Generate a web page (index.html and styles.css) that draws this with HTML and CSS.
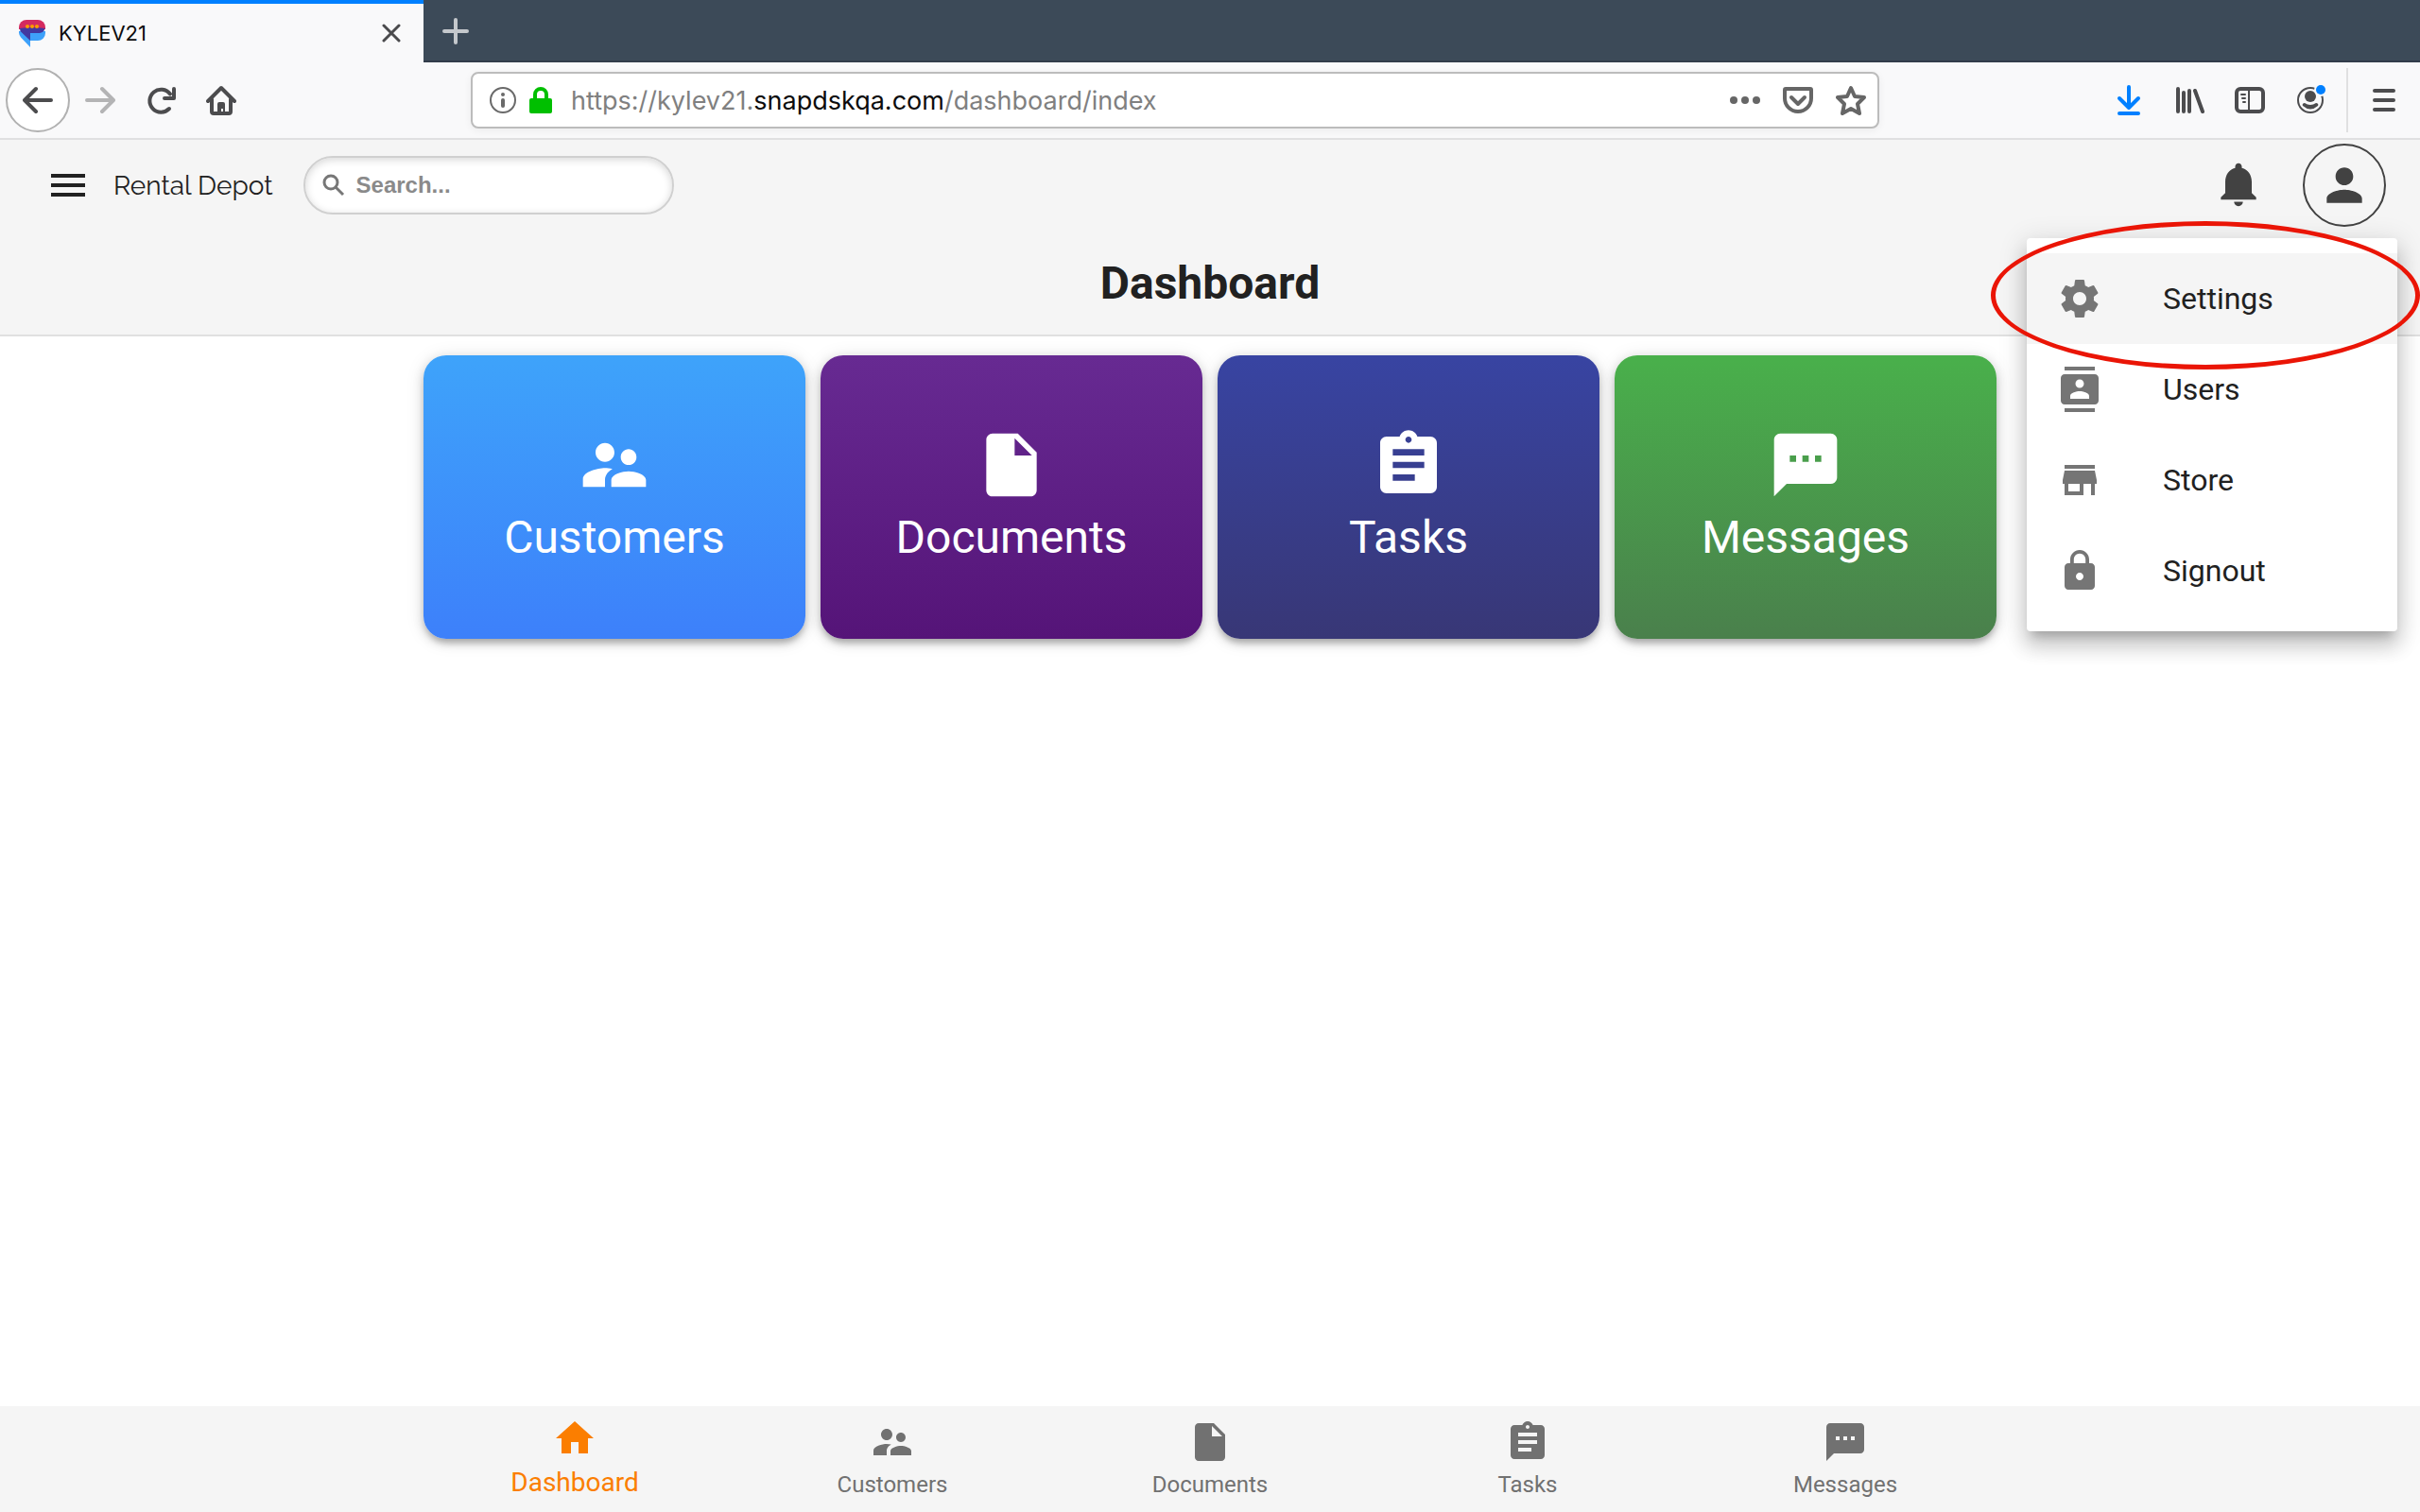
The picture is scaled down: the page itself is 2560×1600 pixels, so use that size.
FILE: index.html
```html
<!DOCTYPE html>
<html lang="en">
<head>
	<meta charset="UTF-8">
	<title>KYLEV21</title>
	<link rel="stylesheet" href="styles.css">
</head>
<body>

	<!-- shared icons -->
	<svg class="sprite" width="0" height="0" aria-hidden="true">
		<symbol id="i-people" viewBox="0 0 24 24"><path d="M16.5 12c1.38 0 2.49-1.12 2.49-2.5S17.88 7 16.5 7C15.12 7 14 8.12 14 9.500s1.12 2.500 2.500 2.500zM9 11c1.660 0 2.990-1.340 2.990-3S10.660 5 9 5C7.340 5 6 6.340 6 8s1.340 3 3 3zm7.500 3c-1.830 0-5.500.92-5.500 2.750V19h11v-2.250c0-1.830-3.670-2.750-5.500-2.750zM9 13c-2.330 0-7 1.170-7 3.500V19h7v-2.250c0-.85.33-2.340 2.370-3.470C10.500 13.100 9.660 13 9 13z"/></symbol>
		<symbol id="i-doc" viewBox="0 0 24 24"><path d="M6 2c-1.100 0-1.990.9-1.990 2L4 20c0 1.100.89 2 1.990 2H18c1.100 0 2-.9 2-2V8l-6-6H6zm7 7V3.500L18.500 9H13z"/></symbol>
		<symbol id="i-tasks" viewBox="0 0 24 24"><path d="M19 3h-4.180C14.400 1.840 13.300 1 12 1c-1.300 0-2.400.84-2.820 2H5c-1.100 0-2 .9-2 2v14c0 1.100.9 2 2 2h14c1.100 0 2-.9 2-2V5c0-1.100-.9-2-2-2zm-7 0c.55 0 1 .45 1 1s-.45 1-1 1-1-.45-1-1 .45-1 1-1zm2 14H7v-2h7v2zm3-4H7v-2h10v2zm0-4H7V7h10v2z"/></symbol>
		<symbol id="i-chat" viewBox="0 0 24 24"><path d="M20 2H4c-1.100 0-1.990.9-1.990 2L2 22l4-4h14c1.100 0 2-.9 2-2V4c0-1.100-.9-2-2-2zM9 11H7V9h2v2zm4 0h-2V9h2v2zm4 0h-2V9h2v2z"/></symbol>
	</svg>

	<div class="tabs">
		<div class="tab">
			<svg class="favicon" viewBox="0 0 28 29">
				<path fill="#3ea1fa" d="M0 12h28v2a8 8 0 0 1-8 8h-8v7L2 18.500A9 9 0 0 1 0 12z"/>
				<path fill="#d42a5f" d="M8 0h12a8 8 0 0 1 8 8v2H0V8a8 8 0 0 1 8-8z"/>
				<path fill="#4338a0" d="M1 9q13-2 26.500 0c-.5 3-3 5-7.500 5h-8v8L1.500 12z"/>
				<g fill="#fb9c00"><circle cx="9" cy="7" r="2"/><circle cx="14" cy="7" r="2"/><circle cx="19" cy="7" r="2"/></g>
			</svg>
			<span class="tabTitle">KYLEV21</span>
			<button class="tabClose" aria-label="Close tab">
				<svg viewBox="0 0 20 20"><path d="M2 2l16 16M18 2L2 18" fill="none" stroke="#4a4a4c" stroke-width="3" stroke-linecap="round"/></svg>
			</button>
		</div>
		<button class="newTab" aria-label="New tab">
			<svg viewBox="0 0 28 28"><path d="M14 2v24M2 14h24" fill="none" stroke="#c4c8cc" stroke-width="4" stroke-linecap="round"/></svg>
		</button>
	</div>

	<div class="toolbar">
		<button class="back" aria-label="Back">
			<svg class="line" viewBox="0 0 32 32"><path d="M30 16H3M14 4L2 16l12 12"/></svg>
		</button>
		<button class="tool forward" aria-label="Forward">
			<svg class="line" viewBox="0 0 32 32"><path d="M2 16h27M18 4l12 12-12 12"/></svg>
		</button>
		<button class="tool" aria-label="Reload">
			<svg class="line" viewBox="0 0 32 32"><path d="M25 25A12 12 0 1 1 26 9.500"/><path d="M30 4v10H20"/></svg>
		</button>
		<button class="tool" aria-label="Home">
			<svg class="line" viewBox="0 0 32 32"><path d="M2 17L16 3l14 14M6 15v13q0 2 2 2h16q2 0 2-2V15"/><path d="M12 30V20q0-2 2-2h4q2 0 2 2v10h-2v-5h-2v5z" fill="#4c4c4e" stroke="none"/></svg>
		</button>

		<div class="urlbar">
			<svg class="info" viewBox="0 0 32 32"><circle cx="16" cy="16" r="13" fill="none" stroke="#6a6a6a" stroke-width="2"/><circle cx="16" cy="10" r="2" fill="#6a6a6a"/><rect x="14" y="14" width="4" height="10" rx="2" fill="#6a6a6a"/></svg>
			<svg class="secure" viewBox="0 0 24 28"><path d="M6 14V8a6 6 0 0 1 12 0v6" fill="none" stroke="#00bf00" stroke-width="4"/><rect y="12" width="24" height="16" rx="2" fill="#00bf00"/></svg>
			<div class="url" role="textbox" aria-label="Address">https://kylev21.<b>snapdskqa.com</b>/dashboard/index</div>
			<button class="urlTool" aria-label="Page actions">
				<svg viewBox="0 0 32 32"><g fill="#666"><circle cx="4" cy="16" r="4"/><circle cx="16" cy="16" r="4"/><circle cx="28" cy="16" r="4"/></g></svg>
			</button>
			<button class="urlTool" aria-label="Save to Pocket">
				<svg class="line" viewBox="0 0 32 32"><path d="M3 4h26q1 0 1 1v9a14 14 0 0 1-28 0V5q0-1 1-1z"/><path d="M9 13l7 7 7-7"/></svg>
			</button>
			<button class="urlTool" aria-label="Bookmark this page">
				<svg class="line" viewBox="0 0 32 32"><path d="M16 3l4 9 10 1-7 7 2 10-9-5-9 5 2-10-7-7 10-1z"/></svg>
			</button>
		</div>

		<button class="tool downloads" aria-label="Downloads">
			<svg class="line" viewBox="0 0 32 32"><path d="M16 2v21M6 14l10 10 10-10M6 30h20"/></svg>
		</button>
		<button class="tool" aria-label="Library">
			<svg class="line" viewBox="0 0 32 32"><path d="M4 4v24M10 8v20M16 6v22M22 6l8 22"/></svg>
		</button>
		<button class="tool" aria-label="Sidebars">
			<svg class="line" viewBox="0 0 32 32"><rect x="2" y="4" width="28" height="24" rx="4"/><path d="M15 4v24M7 10h4M8 14h3M9 18h2" stroke-width="2"/></svg>
		</button>
		<button class="tool" aria-label="Account">
			<svg viewBox="0 0 32 32"><circle cx="16" cy="16" r="13" fill="none" stroke="#4c4c4e" stroke-width="2"/><circle cx="16" cy="12" r="6" fill="#4c4c4e"/><path d="M10 19q6 4 12 0c2 0 3 2 2 3q-8 7-16 0c-1-1 0-3 2-3z" fill="#4c4c4e"/><circle cx="27" cy="5" r="7" fill="#f9f9fa"/><circle cx="27" cy="5" r="5" fill="#0080ff"/></svg>
		</button>
		<span class="divider"></span>
		<button class="appMenu" aria-label="Open menu">
			<svg class="line" viewBox="0 0 32 32"><path d="M6 6h20M6 16h20M6 26h20"/></svg>
		</button>
	</div>

	<header class="header">
		<div class="bar">
			<button class="iconBtn" aria-label="Menu">
				<svg class="menuIcon" viewBox="0 0 24 24"><path d="M3 18h18v-2H3v2zm0-5h18v-2H3v2zm0-7v2h18V6H3z"/></svg>
			</button>
			<span class="company">Rental Depot</span>
			<label class="search">
				<svg viewBox="0 0 24 24"><circle cx="9" cy="9" r="7" fill="none" stroke="#777" stroke-width="3"/><path d="M14 14l8 8" stroke="#777" stroke-width="3"/></svg>
				<input type="text" placeholder="Search..." aria-label="Search">
			</label>
			<button class="iconBtn bell" aria-label="Notifications">
				<svg viewBox="0 0 24 24"><path d="M12 21.500c1.100 0 2-.9 2-2h-4c0 1.100.89 2 2 2zm6-6v-5c0-3.070-1.640-5.640-4.500-6.320V3.500c0-.83-.67-1.500-1.500-1.500s-1.500.67-1.500 1.500v.68C7.630 4.860 6 7.420 6 10.500v5l-2 2v1h16v-1l-2-2z"/></svg>
			</button>
			<button class="iconBtn avatar" aria-label="Account menu">
				<svg viewBox="0 0 24 24"><path d="M12 12c2.210 0 4-1.790 4-4s-1.790-4-4-4-4 1.790-4 4 1.790 4 4 4zm0 2c-2.670 0-8 1.340-8 4v2h16v-2c0-2.660-5.330-4-8-4z"/></svg>
			</button>
		</div>
		<h1 class="title">Dashboard</h1>

		<nav class="menu">
			<a class="active" href="#settings">
				<svg viewBox="0 0 24 24"><path d="M19.430 12.980c.04-.32.07-.64.07-.98s-.03-.66-.07-.98l2.110-1.650c.19-.15.24-.42.12-.64l-2-3.460c-.12-.22-.39-.3-.61-.22l-2.490 1c-.52-.4-1.080-.73-1.690-.98l-.38-2.650C14.460 2.180 14.250 2 14 2h-4c-.25 0-.46.18-.49.42l-.38 2.650c-.61.25-1.170.59-1.690.98l-2.490-1c-.23-.09-.49 0-.61.22l-2 3.460c-.13.22-.07.49.12.64l2.110 1.650c-.04.32-.07.65-.07.98s.03.66.07.98l-2.110 1.650c-.19.15-.24.42-.12.64l2 3.460c.12.22.39.3.61.22l2.490-1c.52.4 1.080.73 1.690.98l.38 2.650c.03.24.24.42.49.42h4c.25 0 .46-.18.49-.42l.38-2.650c.61-.25 1.170-.59 1.690-.98l2.490 1c.23.09.49 0 .61-.22l2-3.460c.12-.22.07-.49-.12-.64l-2.110-1.650zM12 15.500c-1.930 0-3.500-1.570-3.500-3.500s1.570-3.500 3.500-3.500 3.500 1.570 3.500 3.500-1.570 3.500-3.500 3.500z"/></svg>
				Settings
			</a>
			<a href="#users">
				<svg viewBox="0 0 24 24"><path d="M20 0H4v2h16V0zM4 24h16v-2H4v2zM20 4H4c-1.100 0-2 .9-2 2v12c0 1.100.9 2 2 2h16c1.100 0 2-.9 2-2V6c0-1.100-.9-2-2-2zm-8 2.750c1.240 0 2.250 1.010 2.250 2.250s-1.010 2.250-2.250 2.250S9.750 10.240 9.750 9 10.760 6.750 12 6.750zM17 17H7v-1.500c0-1.670 3.330-2.500 5-2.500s5 .83 5 2.500V17z"/></svg>
				Users
			</a>
			<a href="#store">
				<svg viewBox="0 0 24 24"><path d="M20 4H4v2h16V4zm1 10v-2l-1-5H4l-1 5v2h1v6h10v-6h4v6h2v-6h1zm-9 4H6v-4h6v4z"/></svg>
				Store
			</a>
			<a href="#signout">
				<svg viewBox="0 0 24 24"><path d="M18 8h-1V6c0-2.760-2.240-5-5-5S7 3.240 7 6v2H6c-1.100 0-2 .9-2 2v10c0 1.100.9 2 2 2h12c1.100 0 2-.9 2-2V10c0-1.100-.9-2-2-2zm-6 9c-1.100 0-2-.9-2-2s.9-2 2-2 2 .9 2 2-.9 2-2 2zm3.100-9H8.900V6c0-1.710 1.390-3.100 3.100-3.100 1.710 0 3.100 1.390 3.100 3.100v2z"/></svg>
				Signout
			</a>
		</nav>
		<span class="marker"></span>
	</header>

	<main class="cards">
		<a class="card customers" href="#customers"><svg><use href="#i-people"/></svg>Customers</a>
		<a class="card documents" href="#documents"><svg><use href="#i-doc"/></svg>Documents</a>
		<a class="card tasks" href="#tasks"><svg><use href="#i-tasks"/></svg>Tasks</a>
		<a class="card messages" href="#messages"><svg><use href="#i-chat"/></svg>Messages</a>
	</main>

	<nav class="bottom">
		<a class="active" href="#dashboard"><svg viewBox="0 0 24 24"><path d="M10 20v-6h4v6h5v-8h3L12 3 2 12h3v8z"/></svg>Dashboard</a>
		<a href="#customers"><svg><use href="#i-people"/></svg>Customers</a>
		<a href="#documents"><svg><use href="#i-doc"/></svg>Documents</a>
		<a href="#tasks"><svg><use href="#i-tasks"/></svg>Tasks</a>
		<a href="#messages"><svg><use href="#i-chat"/></svg>Messages</a>
	</nav>

</body>
</html>
```
FILE: styles.css
```css
*{
	margin: 0;
	padding: 0;
	box-sizing: border-box;
}
body{
	display: flex;
	flex-direction: column;
	min-height: 100vh;
	background: #fff;
	color: #212121;
	font-family: Roboto, sans-serif;
}
a{
	color: inherit;
	text-decoration: none;
}
button{
	display: flex;
	align-items: center;
	justify-content: center;
	border: none;
	background: none;
}
svg{
	display: block;
	flex: none;
	fill: currentColor;
}
.sprite{
	position: absolute;
}

/* browser tabs */
.tabs{
	display: flex;
	height: 66px;
	background: #3c4a58;
	border-bottom: 2px solid #323c4a;
}
.tab{
	display: flex;
	align-items: center;
	width: 448px;
	height: 66px;
	padding: 0 24px 0 20px;
	border-top: 4px solid #0080ff;
	background: #f9f9fa;
}
.favicon{
	width: 28px;
	height: 29px;
}
.tabTitle{
	flex: 1;
	margin-left: 14px;
	color: #0c0c0d;
	font: 22px Inter, sans-serif;
}
.tabClose svg{
	width: 20px;
	height: 20px;
}
.newTab{
	width: 68px;
	height: 66px;
}
.newTab svg{
	width: 28px;
	height: 28px;
}

/* browser toolbar */
.toolbar{
	display: flex;
	align-items: center;
	height: 82px;
	padding-left: 6px;
	background: #f9f9fa;
	border-bottom: 2px solid #e0e0e1;
	color: #4c4c4e;
}
.toolbar button svg{
	width: 32px;
	height: 32px;
}
.toolbar .line{
	fill: none;
	stroke: currentColor;
	stroke-width: 4;
	stroke-linecap: round;
	stroke-linejoin: round;
}
.back{
	width: 68px;
	height: 68px;
	border: 2px solid #b1b1b1;
	border-radius: 50%;
	background: #fff;
}
.tool{
	width: 64px;
	height: 64px;
	color: inherit;
}
.back,.appMenu{
	color: inherit;
}
.forward{
	color: #b4b4b5;
}
.downloads{
	color: #0080ff;
}
.urlbar{
	display: flex;
	flex: 1;
	align-items: center;
	height: 60px;
	margin: 0 232px;
	padding-left: 16px;
	border: 2px solid #bcbcbc;
	border-radius: 8px;
	background: #fff;
	box-shadow: 0 2px 8px rgba(0,0,0,.06);
}
.info{
	width: 32px;
	height: 32px;
}
.secure{
	width: 24px;
	height: 28px;
	margin-left: 12px;
}
.url{
	flex: 1;
	margin-left: 20px;
	color: #808080;
	font: 27px Inter, sans-serif;
}
.url b{
	color: #0c0c0d;
	font-weight: normal;
}
.urlTool{
	width: 56px;
	height: 56px;
	color: #666;
}
.divider{
	width: 2px;
	height: 68px;
	margin-left: 6px;
	background: #e0e0e1;
}
.appMenu{
	width: 76px;
	height: 64px;
}

/* page header */
.header{
	position: relative;
	background: #f5f5f5;
	border-bottom: 2px solid #e0e0e0;
}
.bar{
	display: flex;
	align-items: center;
	height: 96px;
	padding: 0 36px 0 48px;
}
.iconBtn{
	color: #424242;
}
.iconBtn svg{
	width: 56px;
	height: 56px;
}
.iconBtn .menuIcon{
	width: 48px;
	height: 48px;
	color: #212121;
}
.company{
	margin: 0 32px 0 24px;
	font: 28px Raleway, Lato, sans-serif;
}
.search{
	display: flex;
	align-items: center;
	width: 392px;
	height: 62px;
	padding: 0 18px;
	border: 2px solid #d0d0d0;
	border-radius: 31px;
	background: #fff;
	box-shadow: inset 0 2px 8px rgba(0,0,0,.16);
}
.search svg{
	width: 24px;
	height: 24px;
}
.search input{
	flex: 1;
	min-width: 0;
	margin-left: 12px;
	border: none;
	outline: none;
	background: none;
	font: bold 24px "Liberation Sans", sans-serif;
}
.search input::placeholder{
	color: #8a8a8a;
}
.bell{
	margin: 0 40px 0 auto;
}
.avatar{
	width: 88px;
	height: 88px;
	border: 2px solid #424242;
	border-radius: 50%;
}
.title{
	padding-top: 2px;
	font-size: 48px;
	line-height: 108px;
	text-align: center;
}

/* account menu */
.menu{
	position: absolute;
	top: 104px;
	right: 24px;
	z-index: 1;
	width: 392px;
	padding: 16px 0;
	border-radius: 4px;
	background: #fff;
	box-shadow: 0 10px 10px -6px rgba(0,0,0,.2), 0 16px 20px 2px rgba(0,0,0,.14), 0 6px 28px 4px rgba(0,0,0,.12);
}
.menu a{
	display: flex;
	align-items: center;
	gap: 64px;
	height: 96px;
	padding: 0 32px;
	font-size: 32px;
}
.menu a.active{
	background: #f5f5f5;
}
.menu svg{
	width: 48px;
	height: 48px;
	color: #757575;
}
.marker{
	position: absolute;
	top: 86px;
	right: 0;
	z-index: 2;
	width: 454px;
	height: 157px;
	border: 5px solid #ea1506;
	border-radius: 50%;
	pointer-events: none;
}

/* cards */
.cards{
	display: flex;
	flex: 1;
	align-items: flex-start;
	gap: 16px;
	width: 65%;
	margin: 0 auto;
	padding-top: 20px;
}
.card{
	display: flex;
	flex: 1;
	flex-direction: column;
	align-items: center;
	height: 300px;
	padding-top: 76px;
	border-radius: 24px;
	color: #fff;
	font-size: 48px;
	line-height: 74px;
	box-shadow: 0 6px 6px -2px rgba(0,0,0,.2), 0 4px 12px rgba(0,0,0,.16), 0 2px 20px rgba(0,0,0,.1);
}
.card svg{
	width: 80px;
	height: 80px;
}
.customers{
	background: linear-gradient(#3ea3fa, #3d80fa);
}
.documents{
	background: linear-gradient(#672a92, #551478);
}
.tasks{
	background: linear-gradient(#3844a2, #383776);
}
.messages{
	background: linear-gradient(#49b04b, #4a804c);
}

/* bottom navigation */
.bottom{
	display: flex;
	justify-content: center;
	height: 112px;
	background: #f5f5f5;
	color: #717171;
}
.bottom a{
	display: flex;
	flex-direction: column;
	align-items: center;
	width: 336px;
	padding-top: 14px;
	font-size: 24px;
	line-height: 42px;
}
.bottom a.active{
	padding-top: 10px;
	color: #fb7e00;
	font-size: 28px;
	line-height: 46px;
}
.bottom svg{
	width: 48px;
	height: 48px;
}
```
